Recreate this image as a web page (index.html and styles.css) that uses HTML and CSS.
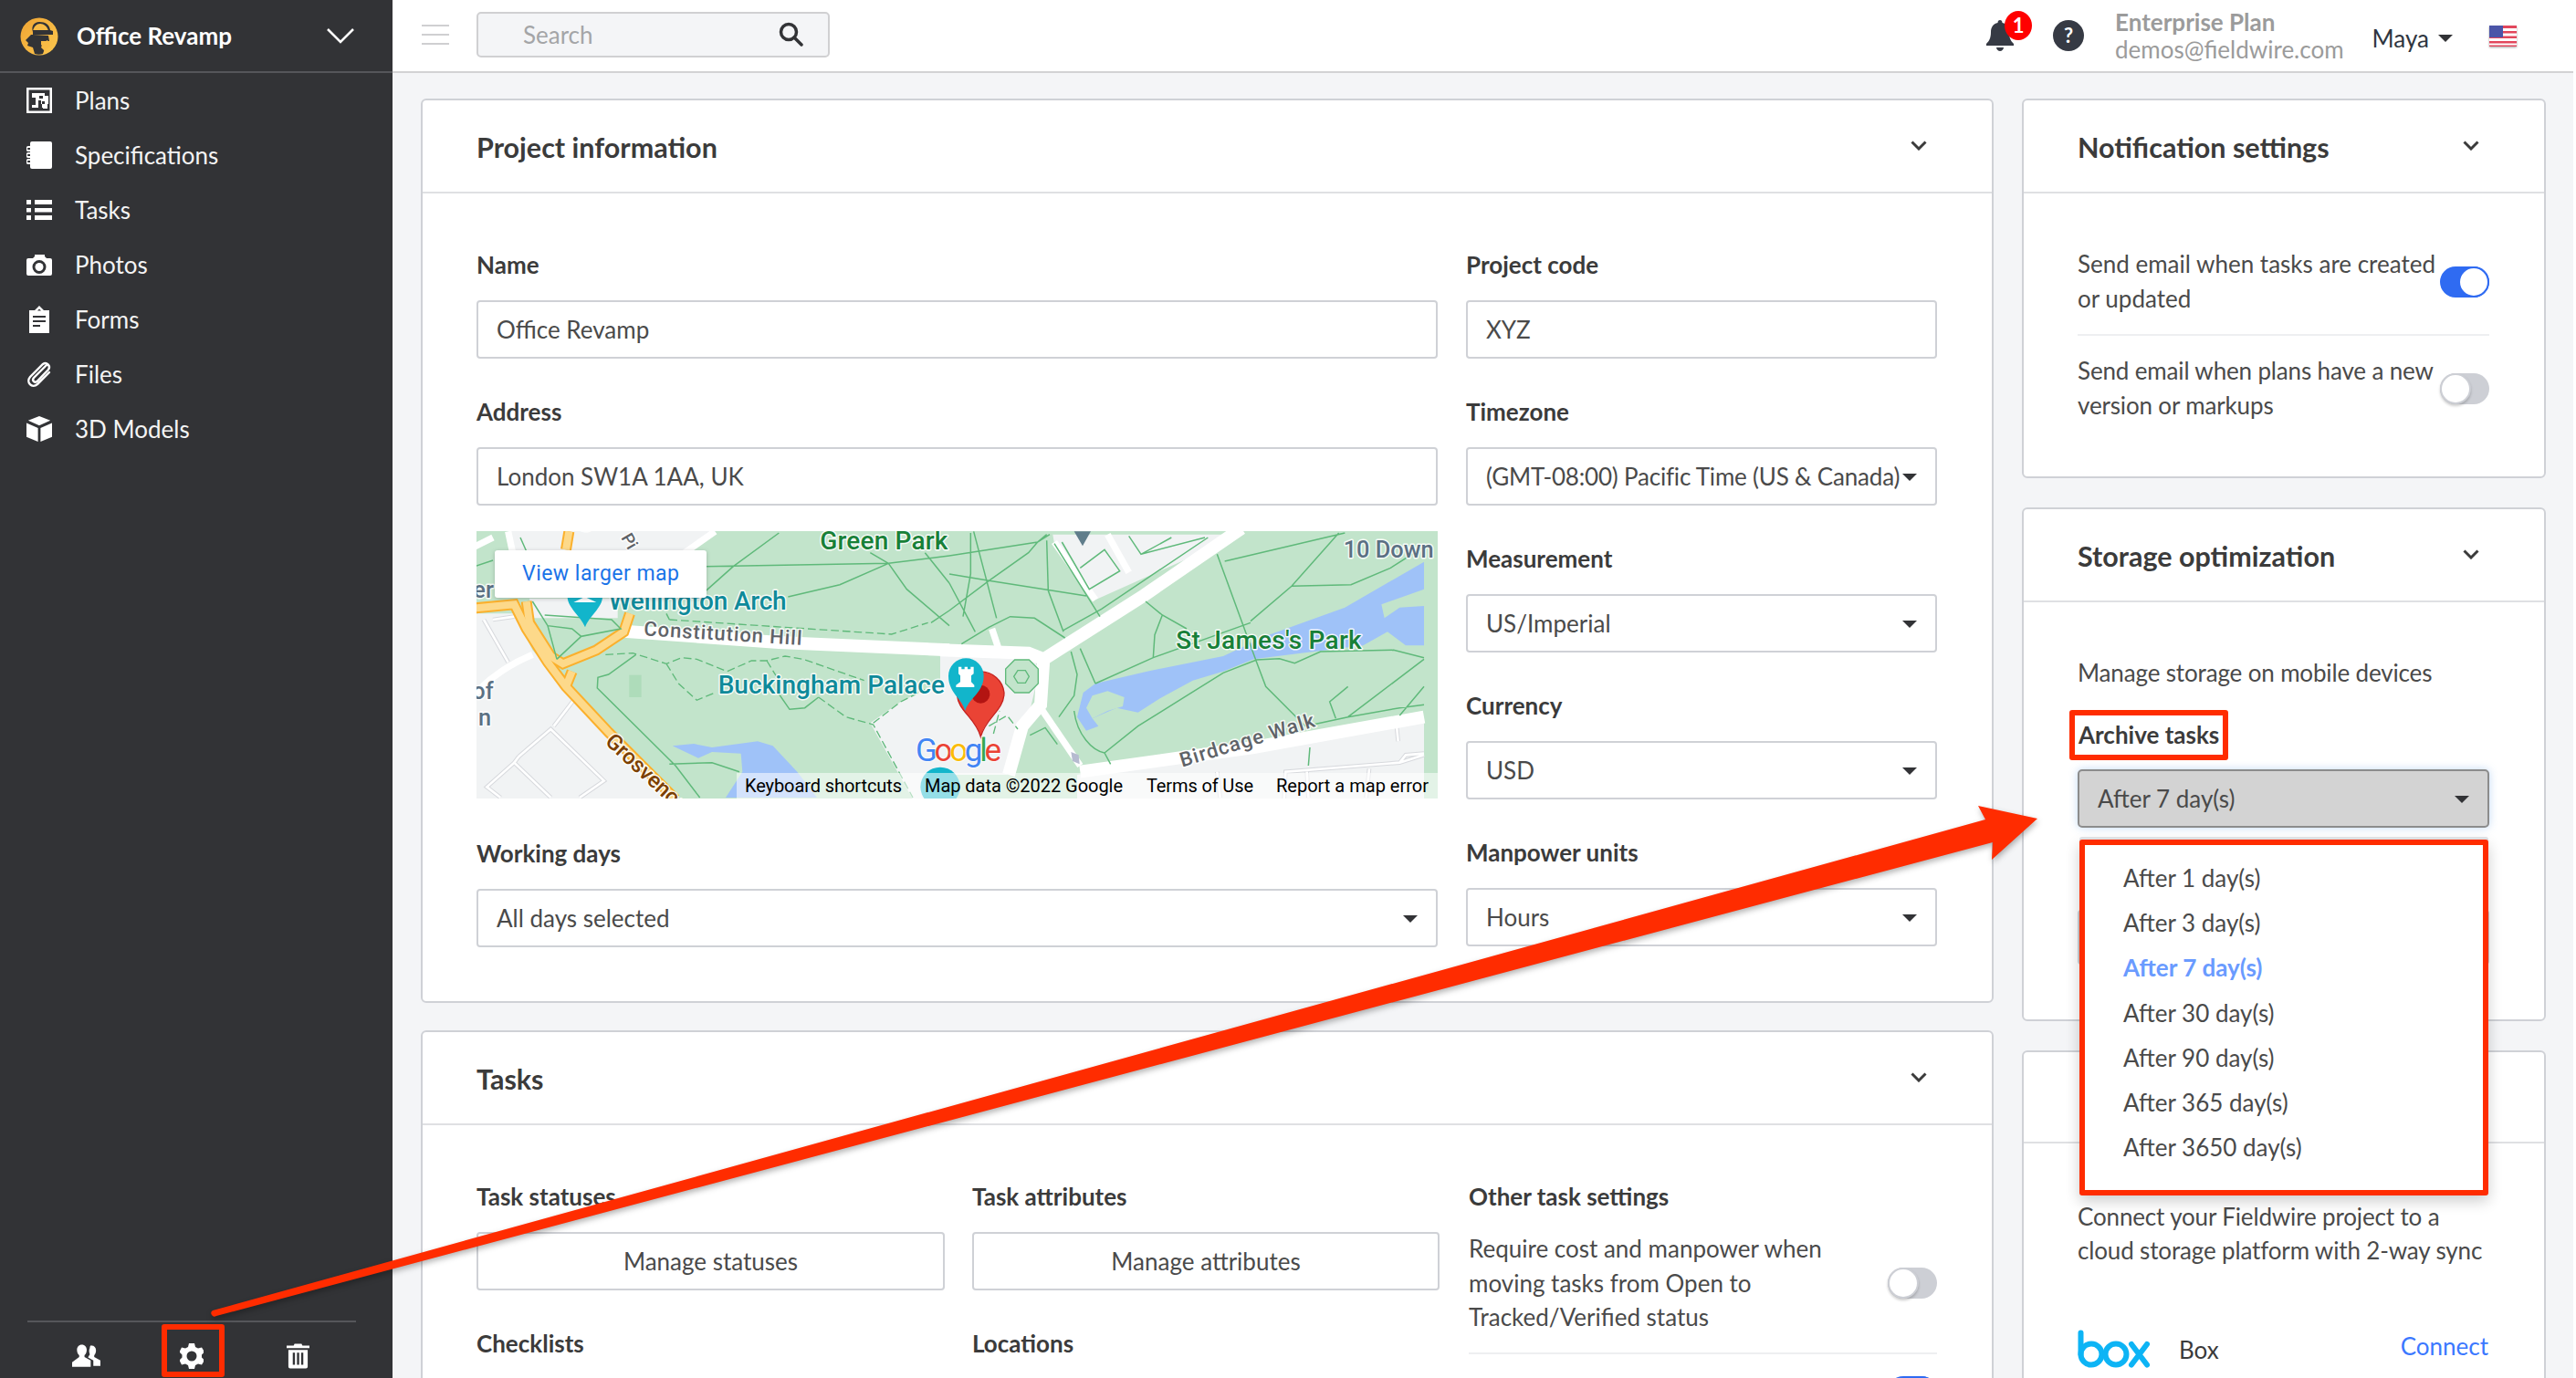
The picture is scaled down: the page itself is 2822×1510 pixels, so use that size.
FILE: index.html
```html
<!DOCTYPE html>
<html lang="en">
<head>
<meta charset="utf-8">
<title>Fieldwire – Project settings</title>
<link rel="stylesheet" href="styles.css">
</head>
<body>
<div class="app">
  <aside class="sidebar">
    <div class="sb-head">
      <svg class="logo" viewBox="0 0 42 42">
        <defs><linearGradient id="lg" x1="0" y1="0" x2="1" y2="1"><stop offset="0" stop-color="#efa433"/><stop offset="1" stop-color="#fcc84f"/></linearGradient></defs>
        <circle cx="21" cy="21" r="20.5" fill="url(#lg)"/>
        <path class="logo-d" d="M21 5c7 0 11 3 12 9l3 1v4H12l-6 6 3 3-1 3 6 2 2 7c3 1 6 1 9 0l2-6-4-4v-4h9l-1-6-17-1v-3C12 10 15 5 21 5z"/>
        <path class="logo-y" d="M14 15c1-5 4-8 8-8s8 3 9 8z"/>
        <path class="logo-d" d="M14 14h17v1.500H14z"/>
        <path class="logo-y" d="M25 28l5-3 3 6-6 6-4-4z"/>
      </svg>
      <span class="sb-title">Office Revamp</span>
      <svg class="sb-chev" viewBox="0 0 30 17"><path d="M1 1l14 14L29 1"/></svg>
    </div>
    <nav class="nav">
      <a class="nav-item">
        <svg class="ico" viewBox="0 0 28 28"><path fill-rule="evenodd" d="M0 0h28v28H0zM2.500 2.500v23h23v-23z"/><path d="M6 6h14v3h-6v3h4v-3h6v9h-4v-3h-3v3h3v4h-3v-4h-1v-4h-3v8H6v-3h4v-8H6z" fill-rule="evenodd"/><path d="M18 18h5v5h-5z"/></svg>
        <span>Plans</span></a>
      <a class="nav-item">
        <svg class="ico" viewBox="0 0 28 30"><path d="M6 0h20a2 2 0 0 1 2 2v26a2 2 0 0 1-2 2H6a2 2 0 0 1-2-2V2a2 2 0 0 1 2-2z"/><path class="ring" d="M6 6H2a1.500 1.500 0 0 0 0 4h4M6 13H2a1.500 1.500 0 0 0 0 4h4M6 20H2a1.500 1.500 0 0 0 0 4h4"/></svg>
        <span>Specifications</span></a>
      <a class="nav-item">
        <svg class="ico" viewBox="0 0 28 22"><path d="M0 0h5v5H0zM9 0h19v5H9zM0 9h5v4.500H0zM9 9h19v4.500H9zM0 17h5v5H0zM9 17h19v5H9z"/></svg>
        <span>Tasks</span></a>
      <a class="nav-item">
        <svg class="ico" viewBox="0 0 28 24"><path fill-rule="evenodd" d="M2 5h5l2-2V1h11v2l2 2h4a2 2 0 0 1 2 2v15a2 2 0 0 1-2 2H2a2 2 0 0 1-2-2V7a2 2 0 0 1 2-2zM14 7a7.500 7.500 0 1 0 0 15 7.500 7.500 0 0 0 0-15z"/><circle cx="14" cy="14.500" r="4.500"/></svg>
        <span>Photos</span></a>
      <a class="nav-item">
        <svg class="ico" viewBox="0 0 24 30"><path fill-rule="evenodd" d="M1 5h6l5-5 5 5h6v25H1zM12 3.500L10 5.500h4zM5 11v2h14v-2zM5 16v2h14v-2zM5 21v2h8v-2z"/></svg>
        <span>Forms</span></a>
      <a class="nav-item">
        <svg class="ico" viewBox="0 0 28 30"><path class="clip" d="M23 4L8 19c-2.500 3 1 6 3.500 4L24 10c3-4-2-9-6-6L4 18c-5 6 2 13 8 8L25 13"/></svg>
        <span>Files</span></a>
      <a class="nav-item">
        <svg class="ico cube" viewBox="0 0 30 30"><path d="M15 0l13 5-13 6L2 5zM0 8l13.500 6v16L0 24.500zM30 8v16.500L16.500 30V14z"/></svg>
        <span>3D Models</span></a>
    </nav>
    <div class="sb-foot">
      <span class="foot-ico">
        <svg class="fi-users" viewBox="0 0 32 26"><path d="M11 0c3.500 0 5.500 2.500 5.500 6 0 2.500-1 5-2.500 6v2l7 4v7H0v-5l8-6v-2C6.500 11 5.500 8.500 5.500 6 5.500 2.500 7.500 0 11 0z"/><path d="M22 1c3 0 5 2 5 5.500 0 2.500-1 4.500-2 5.500v2l7 4v6h-8v-6l-6-3.500c1-2 2-3 2-3.500-1-3-1-5 0-7 0-2 1-3.500 2-3z"/></svg>
      </span>
      <span class="foot-ico foot-mark">
        <svg class="fi-gear" viewBox="0 0 26 28"><path fill-rule="evenodd" d="M10 0h6l1 4 3 1.500 4-1 3 5-3 3v3l3 3-3 5-4-1-3 1.500-1 4h-6l-1-4L6 22.500l-4 1-2.500-5 3-3v-3l-3-3 2.500-5 4 1L9 4zM13 8.500a5.500 5.500 0 1 0 0 11 5.500 5.500 0 0 0 0-11z"/></svg>
      </span>
      <span class="foot-ico">
        <svg class="fi-trash" viewBox="0 0 26 28"><path fill-rule="evenodd" d="M9 0h8l1 2h8v3H0V2h8zM2 7h22v19a2 2 0 0 1-2 2H4a2 2 0 0 1-2-2zM7 10v14h2.500V10zM11.800 10v14h2.500V10zM16.500 10v14H19V10z"/></svg>
      </span>
    </div>
  </aside>

  <main class="main">
    <header class="topbar">
      <div class="burger"><i></i><i></i><i></i></div>
      <div class="search">
        <span>Search</span>
        <svg class="search-ico" viewBox="0 0 27 27"><circle cx="11" cy="11" r="8.500"/><path d="M17 17l8 8"/></svg>
      </div>
      <div class="top-right">
        <div class="bell">
          <svg viewBox="0 0 30 34"><path d="M15 0c1.500 0 2.500 1 2.500 3 5 1 7.500 5 7.500 10 0 7 2 10 5 13v2H0v-2c3-3 5-6 5-13 0-5 2.500-9 7.500-10 0-2 1-3 2.500-3z"/><path d="M11 30h8c0 2-2 4-4 4s-4-2-4-4z"/></svg>
          <b class="badge">1</b>
        </div>
        <span class="help">?</span>
        <div class="plan">
          <strong>Enterprise Plan</strong>
          <span>demos@fieldwire.com</span>
        </div>
        <span class="user">Maya</span>
        <i class="caret caret-user"></i>
        <svg class="flag" viewBox="0 0 30 23">
          <rect width="30" height="23" fill="#fff"/>
          <path d="M0 0h30v3H0zM0 6h30v2.500H0zM0 11.500h30V14H0zM0 17h30v2.500H0zM0 21.500h30V23H0z" fill="#e2475c"/>
          <rect width="15" height="13" fill="#4b55a8"/>
        </svg>
      </div>
    </header>

    <div class="content">
      <div class="col-left">
        <section class="card">
          <div class="card-head"><h2>Project information</h2><svg class="chev" viewBox="0 0 18 11"><path d="M1.500 1.500L9 9l7.500-7.500"/></svg></div>
          <div class="card-body form">
            <div class="form-col wide">
              <div class="field"><label>Name</label><div class="input">Office Revamp</div></div>
              <div class="field"><label>Address</label><div class="input">London SW1A 1AA, UK</div></div>
              <svg class="map" viewBox="522 583 1053 293" role="img">
                <defs>
                  <g id="sta"><path d="M260 650L325 565M145 750L250 660L425 830L345 885M130 770L40 850L85 885M145 750L130 770L250 885M30 300L110 440M60 300L130 290"/></g>
                  <g id="stb"><path d="M1100 890L1105 800L1480 770L1560 745M1470 650L1475 700M1480 770L1500 745L1560 740M880 800L890 885M1380 790L1370 885M1175 800L1180 885"/></g>
                </defs>
                <rect class="m-park" x="522" y="583" width="1053" height="293"/>
                <g transform="translate(520 580) scale(.33333)">
                  <path class="m-gray" d="M0 280L130 280L190 400L330 560L650 890L0 890Z"/>
                  <path class="m-gray" d="M110 0H790L700 80H130Z"/>
                  <path class="m-gray" d="M180 230H470V295H190Z"/>
                  <path class="m-gray" d="M1300 640L1400 570L1560 490V890H1440Z"/>
                  <use href="#sta" class="m-edge"/><use href="#sta" class="m-st"/>
                  <path class="m-road" d="M0 545C60 480 130 440 190 415"/>
                  <path class="m-road" d="M110 10L125 80M0 60L60 30M690 80L790 10"/>
                  <path class="m-road-big" d="M490 338L1000 375L1560 400"/>
                  <path class="m-hw-o" d="M0 262L130 250L170 330L240 440L300 520L440 670L660 890"/>
                  <path class="m-hw-o" d="M170 240L180 310L250 420L290 445L400 400L490 340L510 280"/>
                  <path class="m-hw-o" d="M300 520L320 470"/>
                  <path class="m-hw-o" d="M310 10L300 70"/>
                  <path class="m-hw-y" d="M0 262L130 250L170 330L240 440L300 520L440 670L660 890"/>
                  <path class="m-hw-y" d="M170 240L180 310L250 420L290 445L400 400L490 340L510 280"/>
                  <path class="m-hw-y" d="M300 520L320 470"/>
                  <path class="m-hw-y" d="M310 10L300 70"/>
                  <path class="m-water" d="M650 715L720 708L780 720L930 700L980 715L1060 800L1125 885H825L880 800L875 740L780 735L735 755Z"/>
                  <rect class="m-patch" x="508" y="482" width="40" height="73"/>
                  <path class="m-path" d="M760 125L1360 115L1560 90M850 125L760 205M1030 225L1200 185L1360 115L1420 200L1560 320M1300 80L1360 115M1480 80L1560 180M1000 15L850 125M530 415L440 480L405 490L403 525L660 780L740 885M990 530L1035 595L1085 590L1130 555M190 240L240 320L320 330L350 355L480 330L450 300L230 285M240 320L270 430M350 355L270 430M640 775L780 770L870 800M0 125L60 105M150 30L170 75M640 300L630 280M1560 270L1500 310"/>
                  <path class="m-dash" d="M640 300L1370 348L1490 310M430 415L520 410L630 445L680 425L730 430L830 470L910 435L960 435L1020 420L1080 430L1280 500M630 445L670 510L730 565L790 540M960 435L1000 500M1130 555L1220 620L1310 645L1440 885M1310 640L1400 570L1480 530"/>
                  <path class="m-pin" d="M363 325C350 290 305 260 305 225H420C420 260 375 290 363 325Z"/>
                  <path class="m-white" d="M325 243L362 225L400 243Z"/>
                </g>
                <g transform="translate(1040 580) scale(.33333)">
                  <path class="m-gray" d="M-30 400H270L295 470L260 620L190 810H-30Z"/>
                  <path class="m-gray" d="M340 20H960L480 235L345 50Z"/>
                  <path class="m-gray" d="M420 810L1560 640V890H420Z"/>
                  <use href="#stb" class="m-edge"/><use href="#stb" class="m-st"/>
                  <path class="m-road-big" d="M-30 400L260 410L310 430L640 220L960 0"/>
                  <path class="m-road-big" d="M310 430L300 580L240 650L195 810"/>
                  <path class="m-road" d="M300 590L430 780"/>
                  <path class="m-road-big" d="M430 800L1000 720L1560 620"/>
                  <path class="m-road" d="M140 330L160 390M520 20L590 145M345 45L480 235"/>
                  <path class="m-water" d="M420 620L440 540L480 510L650 470L900 420L1050 350L1300 260L1560 110V200L1420 250L1430 295L1480 260L1560 255V385L1500 385L1440 340L1360 385L1000 430L900 470L800 500L690 560L620 605L550 590L470 625L490 650L450 665Z"/>
                  <path class="m-park" d="M450 590L470 550L520 535L575 555L570 585L520 600L470 625Z"/>
                  <path class="m-path" d="M0 90L290 45L330 20M0 150L130 172L450 222M0 270L130 172L260 80L290 45L320 20M80 10L155 295M70 15L70 150L45 290M320 40L325 205L375 340M0 180L85 340M375 335L500 265L850 30M345 50L495 290M40 380L130 325L200 290L280 295L380 360M880 85L1010 440L1040 520L1170 650M905 108L1300 15M1125 190L1320 185L1450 130L1560 60M990 305L1125 190L1280 15M645 240L700 285L780 330M700 285L675 350L670 425M480 510L670 425L990 310M430 395L480 510M400 405L420 480L410 550L360 620M410 600C420 680 470 730 510 738L620 650L900 475L1010 432L1085 428L1135 443L1220 405L1460 400L1560 425M510 738L530 775M1170 650L1310 620L1480 590L1560 580M1310 620L1560 430M1310 520L1250 570L1270 625M1480 615L1560 520M1185 720L1180 780M265 680L315 655L355 710M370 45L460 200L560 140L510 70L430 130M630 85L840 30M590 25L630 85L730 30"/>
                  <path class="m-dash" d="M130 650L190 615L225 660M145 675L165 600"/>
                  <path class="m-octa" d="M215 432H262L292 462V510L262 540H215L185 510V462Z"/>
                  <path class="m-octa-in" d="M225 467H250L262 487L250 508H225L212 487Z"/>
                  <path class="m-arrow" d="M400 735L425 745L428 775L405 765Z"/>
                  <path class="m-slate" d="M410 10H465L438 58Z"/>
                  <path class="m-red" d="M103 685C85 620 25 600 25 540A78 78 0 0 1 180 540C180 600 120 620 103 685Z"/>
                  <circle class="m-red-dot" cx="103" cy="545" r="30"/>
                  <path class="m-pin" d="M52 600C42 560 -3 540 -3 485A58 58 0 0 1 113 485C113 540 62 560 52 600Z"/>
                  <path class="m-white" d="M30 455H40V463H50V455H60V463H70V455H80V478L72 484V505L82 515V522H22V515L36 505V484L30 478Z"/>
                  <circle class="m-pin" cx="-30" cy="850" r="65"/>
                </g>
                <g transform="translate(520 580) scale(.33333)">
                  <text class="ml l-green" x="1135" y="68" textLength="420">Green Park</text>
                  <text class="ml l-teal" x="440" y="268" textLength="585">Wellington Arch</text>
                  <text class="ml l-teal" x="800" y="542" textLength="745">Buckingham Palace</text>
                  <text class="ml l-road" x="555" y="352" textLength="520" transform="rotate(3.500 555 352)">Constitution Hill</text>
                  <text class="ml l-brown" x="425" y="705" transform="rotate(43 425 705)">Grosvenor</text>
                  <text class="ml l-brown l-sm" x="345" y="12" transform="rotate(90 345 12)" text-anchor="end">20</text>
                  <text class="ml l-slate" x="-5" y="228" fill="#0f8a9a">er</text>
                  <text class="ml l-slate" x="-8" y="560">of</text>
                  <text class="ml l-slate" x="12" y="648">n</text>
                  <text class="ml l-road l-sm" x="480" y="30" transform="rotate(60 480 30)">Pi</text>
                </g>
                <g transform="translate(1040 580) scale(.33333)">
                  <text class="ml l-green" x="745" y="395" textLength="610">St James's Park</text>
                  <text class="ml l-slate" x="1295" y="97">10 Down</text>
                  <text class="ml l-road" x="765" y="785" textLength="460" transform="rotate(-17 765 785)">Birdcage Walk</text>
                </g>
                <text class="m-google" x="1003" y="835" textLength="94"><tspan fill="#4285f4">G</tspan><tspan fill="#ea4335">o</tspan><tspan fill="#fbbc05">o</tspan><tspan fill="#4285f4">g</tspan><tspan fill="#34a853">l</tspan><tspan fill="#ea4335">e</tspan></text>
                <rect class="m-foot" x="807" y="848" width="768" height="28"/>
                <text class="m-ft" x="816" y="869" textLength="172">Keyboard shortcuts</text>
                <text class="m-ft" x="1013" y="869" textLength="217">Map data ©2022 Google</text>
                <text class="m-ft" x="1256" y="869" textLength="117">Terms of Use</text>
                <text class="m-ft" x="1398" y="869" textLength="167">Report a map error</text>
                <rect class="m-btn" x="542" y="604" width="232" height="52" rx="3"/>
                <text class="m-link" x="572" y="637" textLength="172">View larger map</text>
              </svg>
              <div class="field field-after-map"><label>Working days</label><div class="input select">All days selected<i class="caret"></i></div></div>
            </div>
            <div class="form-col narrow">
              <div class="field"><label>Project code</label><div class="input">XYZ</div></div>
              <div class="field"><label>Timezone</label><div class="input select tz">(GMT-08:00) Pacific Time (US &amp; Canada)<i class="caret"></i></div></div>
              <div class="field"><label>Measurement</label><div class="input select">US/Imperial<i class="caret"></i></div></div>
              <div class="field"><label>Currency</label><div class="input select">USD<i class="caret"></i></div></div>
              <div class="field"><label>Manpower units</label><div class="input select">Hours<i class="caret"></i></div></div>
            </div>
          </div>
        </section>

        <section class="card">
          <div class="card-head"><h2>Tasks</h2><svg class="chev" viewBox="0 0 18 11"><path d="M1.500 1.500L9 9l7.500-7.500"/></svg></div>
          <div class="card-body tasks">
            <div class="task-col">
              <label>Task statuses</label>
              <div class="btn">Manage statuses</div>
              <label class="label-next">Checklists</label>
            </div>
            <div class="task-col">
              <label>Task attributes</label>
              <div class="btn">Manage attributes</div>
              <label class="label-next">Locations</label>
            </div>
            <div class="task-col task-col-last">
              <label>Other task settings</label>
              <div class="row row-task">
                <p>Require cost and manpower when moving tasks from Open to Tracked/Verified status</p>
                <span class="toggle"></span>
              </div>
              <div class="row-next"><span class="toggle on"></span></div>
            </div>
          </div>
        </section>
      </div>

      <div class="col-right">
        <section class="card">
          <div class="card-head"><h2>Notification settings</h2><svg class="chev" viewBox="0 0 18 11"><path d="M1.500 1.500L9 9l7.500-7.500"/></svg></div>
          <div class="card-body notif">
            <div class="row row-line">
              <p>Send email when tasks are created or updated</p>
              <span class="toggle on"></span>
            </div>
            <div class="row">
              <p class="tight">Send email when plans have a new version or markups</p>
              <span class="toggle"></span>
            </div>
          </div>
        </section>

        <section class="card">
          <div class="card-head"><h2>Storage optimization</h2><svg class="chev" viewBox="0 0 18 11"><path d="M1.500 1.500L9 9l7.500-7.500"/></svg></div>
          <div class="card-body storage">
            <p class="manage">Manage storage on mobile devices</p>
            <label class="boxed">Archive tasks</label>
            <div class="dd">
              <div class="input select focused">After 7 day(s)<i class="caret"></i></div>
              <ul class="menu">
                <li>After 1 day(s)</li>
                <li>After 3 day(s)</li>
                <li class="sel">After 7 day(s)</li>
                <li>After 30 day(s)</li>
                <li>After 90 day(s)</li>
                <li>After 365 day(s)</li>
                <li>After 3650 day(s)</li>
              </ul>
            </div>
            <div class="input behind"></div>
          </div>
        </section>

        <section class="card">
          <div class="card-head card-head-blank"></div>
          <div class="card-body cloud">
            <p class="tight">Connect your Fieldwire project to a cloud storage platform with 2-way sync</p>
            <div class="box-row">
              <svg class="box-logo" viewBox="0 0 80 42"><g><path d="M3.500 3.500V27"/><circle cx="15" cy="27" r="11.500"/><circle cx="42" cy="27" r="11.500"/><path d="M59 16l17 22.500M76 16L59 38.500"/></g></svg>
              <span class="box-name">Box</span>
              <a class="connect">Connect</a>
            </div>
          </div>
        </section>
      </div>
    </div>
  </main>
</div>
<svg class="arrow" viewBox="0 0 2822 1510"><path d="M233 1436L2175 898L2167 883L2232 897L2182 942L2183 923L237 1442A3 3 0 0 1 233 1436Z"/></svg>
</body>
</html>
```

FILE: styles.css
```css
*, *::before, *::after { box-sizing: border-box; }
html, body { margin: 0; height: 100%; }
body { font-family: "Lato", "Noto Sans", sans-serif; font-size: 26px; color: #4a4a4a; background: #fff; overflow: hidden; }
p, h2, ul { margin: 0; padding: 0; }
.app { display: flex; height: 1510px; overflow: hidden; }

/* sidebar */
.sidebar { width: 430px; flex: none; background: #323336; color: #fff; display: flex; flex-direction: column; }
.sb-head { height: 80px; border-bottom: 2px solid #55565a; display: flex; align-items: center; padding: 0 42px 0 22px; flex: none; }
.logo { width: 42px; height: 42px; flex: none; margin-top: 1px; }
.logo-d { fill: #323336; }
.logo-y { fill: #f8bb45; }
.sb-title { margin-left: 20px; font-weight: 700; font-size: 26px; flex: 1; }
.sb-chev { width: 30px; height: 17px; fill: none; stroke: #fff; stroke-width: 2.500; }
.nav { padding-top: 0; flex: 1; }
.nav-item { height: 60px; display: flex; align-items: center; padding-left: 29px; font-size: 26px; color: #f4f4f4; }
.nav-item span { margin-left: 25px; }
.ico { width: 28px; height: 30px; fill: #fff; flex: none; }
.ring { fill: none; stroke: #fff; stroke-width: 1.800; }
.clip { fill: none; stroke: #fff; stroke-width: 2.400; stroke-linecap: round; }
.sb-foot { margin: 0 40px 0 30px; height: 63px; border-top: 2px solid #55565a; display: flex; flex: none; }
.foot-ico { width: 104px; display: flex; align-items: center; justify-content: center; position: relative; padding-top: 13px; }
.foot-ico:first-child { width: 128px; }
.foot-ico:last-child { width: 128px; }
.fi-users { width: 31px; height: 26px; fill: #fff; }
.fi-gear { width: 26px; height: 28px; fill: #fff; }
.fi-trash { width: 25px; height: 28px; fill: #fff; }
.foot-mark::after { content: ""; position: absolute; left: 19px; top: 2px; width: 69px; height: 58px; border: 6px solid #ff2c00; border-radius: 3px; }

/* main */
.main { width: 2389px; flex: none; background: #f4f5f7; display: flex; flex-direction: column; }
.topbar { height: 80px; flex: none; background: #fff; border-bottom: 2px solid #d2d2d4; display: flex; align-items: center; padding-left: 32px; }
.burger { width: 30px; display: flex; flex-direction: column; gap: 8px; margin-bottom: 2px; }
.burger i { display: block; height: 2px; background: #cfcfd1; }
.search { width: 387px; height: 50px; margin-left: 30px; margin-bottom: 3px; background: #f4f5f7; border: 2px solid #d0d0d2; border-radius: 5px; display: flex; align-items: center; justify-content: space-between; padding: 0 27px 0 49px; color: #a4a5a7; }
.search-ico { width: 27px; height: 27px; fill: none; stroke: #323336; stroke-width: 3.500; stroke-linecap: round; }
.top-right { margin-left: auto; display: flex; align-items: center; }
.bell { width: 30px; height: 34px; position: relative; fill: #363a44; }
.bell svg { width: 30px; height: 34px; display: block; }
.badge { position: absolute; left: 20px; top: -10px; width: 30px; height: 32px; border-radius: 50%; background: #f00; color: #fff; font-size: 22px; text-align: center; line-height: 32px; }
.help { width: 34px; height: 34px; margin-left: 43px; border-radius: 50%; background: #363a44; color: #fff; font-weight: 700; font-size: 22px; text-align: center; line-height: 34px; }
.plan { margin-left: 34px; display: flex; flex-direction: column; color: #9b9b9b; line-height: 30px; font-size: 26px; }
.plan strong { font-weight: 700; }
.user { margin-left: 31px; color: #2f3640; font-size: 26px; margin-top: 6px; }
.caret { display: inline-block; width: 0; height: 0; border-left: 8px solid transparent; border-right: 8px solid transparent; border-top: 8px solid #323336; }
.caret-user { margin-left: 10px; margin-top: 6px; }
.flag { width: 30px; height: 23px; margin-left: 40px; margin-right: 62px; filter: drop-shadow(0 1px 1px rgba(0,0,0,.35)); }

/* content */
.content { flex: 1; display: flex; gap: 31px; padding: 28px 32px 0 31px; min-height: 0; }
.col-left { width: 1723px; flex: none; display: flex; flex-direction: column; gap: 30px; }
.col-right { width: 574px; flex: none; display: flex; flex-direction: column; gap: 32px; }
.card { background: #fff; border: 2px solid #cfd1d6; border-radius: 6px; flex: none; }
.card-head { height: 102px; border-bottom: 2px solid #dfe0e3; display: flex; align-items: center; justify-content: space-between; padding: 2px 59px 0 59px; }
.card-head h2 { font-size: 30.500px; font-weight: 700; color: #3b3b3b; }
.chev { width: 18px; height: 11px; fill: none; stroke: #3b3b3b; stroke-width: 3; margin-right: 12px; margin-bottom: 4px; }
label { display: block; font-weight: 700; color: #3b3b3b; line-height: 36px; }

/* form */
.form { display: flex; gap: 31px; padding: 60px 61px 59px 59px; }
.form-col { display: flex; flex-direction: column; }
.wide { width: 1053px; flex: none; }
.narrow { width: 516px; flex: none; }
.field { margin-bottom: 40px; }
.form-col .field:last-child { margin-bottom: 0; }
.field > label { margin-bottom: 21px; }
.input { height: 64px; border: 2px solid #cfd1d6; border-radius: 4px; background: #fff; display: flex; align-items: center; padding-left: 20px; position: relative; white-space: nowrap; color: #4a4a4a; }
.select .caret { position: absolute; right: 20px; top: 27px; }
.tz { letter-spacing: -.2px; }
.tight { letter-spacing: -.15px; }
.map { display: block; width: 1053px; height: 293px; margin-top: -12px; }
.field-after-map { margin-top: 42px; }

.m-park { fill: #c2e4cb; }
.m-gray { fill: #f1f3f4; }
.m-patch { fill: #aedcba; }
.m-water { fill: #9fc2f8; }
.m-road { fill: none; stroke: #fff; stroke-width: 22; }
.m-road-big { fill: none; stroke: #fff; stroke-width: 42; }
.m-edge { fill: none; stroke: #d7d9dd; stroke-width: 14; }
.m-st { fill: none; stroke: #fff; stroke-width: 8; }
.m-hw-o { fill: none; stroke: #fbb02c; stroke-width: 36; }
.m-hw-y { fill: none; stroke: #fdd98a; stroke-width: 24; }
.m-path { fill: none; stroke: #5fb97a; stroke-width: 4.500; }
.m-dash { fill: none; stroke: #5fb97a; stroke-width: 4; stroke-dasharray: 26 12; }
.m-pin { fill: #12b5cb; }
.m-white { fill: #fff; }
.m-red { fill: #ea4335; stroke: #c5221f; stroke-width: 4; }
.m-red-dot { fill: #b31412; }
.m-slate { fill: #607d8b; }
.m-arrow { fill: #b6bbd0; }
.m-octa { fill: #c2e4cb; stroke: #5fb97a; stroke-width: 4; }
.m-octa-in { fill: none; stroke: #5fb97a; stroke-width: 4; }
.ml { font-family: "Roboto", "Liberation Sans", sans-serif; font-size: 84px; font-weight: 500; paint-order: stroke; stroke: rgba(255,255,255,.85); stroke-width: 9; stroke-linejoin: round; }
.l-green { fill: #188038; }
.l-teal { fill: #0f8a9a; }
.l-road { fill: #5f6368; font-size: 66px; }
.l-brown { fill: #7b3f00; font-size: 72px; }
.l-slate { fill: #5b7083; font-size: 76px; }
.l-sm { font-size: 56px; }
.m-google { font-family: "Roboto", "Liberation Sans", sans-serif; font-size: 35px; font-weight: 400; paint-order: stroke; stroke: rgba(255,255,255,.7); stroke-width: 2; }
.m-foot { fill: rgba(255,255,255,.55); }
.m-ft { font-family: "Roboto", "Liberation Sans", sans-serif; font-size: 20px; fill: #000; }
.m-btn { fill: #fff; filter: drop-shadow(0 1px 2px rgba(60,64,67,.3)); }
.m-link { font-family: "Roboto", "Liberation Sans", sans-serif; font-size: 23px; fill: #1a73e8; }

/* tasks */
.tasks { display: grid; grid-template-columns: 513px 512px 515px; column-gap: 30px; padding: 60px 61px 0 59px; }
.task-col-last { padding-left: 2px; }
.btn { height: 64px; margin-top: 21px; border: 2px solid #cfd1d6; border-radius: 4px; display: flex; align-items: center; justify-content: center; color: #4a4a4a; }
.label-next { margin-top: 40px; }
.row { display: flex; align-items: center; justify-content: space-between; line-height: 37.500px; }
.row-task { margin-top: 21px; padding-bottom: 19px; border-bottom: 2px solid #eeeff1; }
.row-task p { width: 440px; }
.row-next { display: flex; justify-content: flex-end; margin-top: 24px; }
.toggle { width: 54px; height: 34px; flex: none; border-radius: 17px; background: #cdcfd5; position: relative; display: block; }
.toggle::after { content: ""; position: absolute; left: 0; top: 0; width: 34px; height: 34px; border-radius: 50%; background: #fff; border: 2px solid #cdcfd5; box-shadow: 0 2px 3px rgba(0,0,0,.2); }
.toggle.on { background: #2f6bf2; }
.toggle.on::after { left: 20px; border-color: #2f6bf2; box-shadow: none; }

/* right */
.notif { padding: 59px 60px 59px 59px; }
.notif p { width: 395px; }
.row-line { padding-bottom: 20px; margin-bottom: 20px; border-bottom: 2px solid #eeeff1; }
.storage { padding: 59px 60px 0 59px; height: 457px; position: relative; }
.manage { line-height: 36px; letter-spacing: -.15px; }
.boxed { position: relative; display: inline-block; margin: 23px 0 0 -9px; padding: 0 4px; border: 6px solid #ff2c00; border-radius: 3px; line-height: 43px; height: 55px; }
.dd { position: relative; margin-top: 10px; }
.focused { background: #d3d3d3; border-color: #8c8c8c; border-radius: 5px; box-shadow: 0 0 10px rgba(120,170,230,.45); }
.menu { position: absolute; z-index: 5; left: 2px; right: 1px; top: 77px; height: 390px; list-style: none; background: #fff; border: 6px solid #ff2c00; border-radius: 3px; padding: 12px 0 0 42px; box-shadow: 0 -3px 0 #dfe0e3, 0 6px 16px rgba(0,0,0,.2); }
.menu li { line-height: 49.200px; color: #4a4a4a; }
.menu .sel { color: #6a9bff; font-weight: 700; }
.behind { margin-top: 90px; height: 60px; }
.card-head-blank { height: 100px; }
.cloud { padding: 62px 61px 0 59px; height: 400px; line-height: 37px; }
.box-row { display: flex; align-items: center; margin-top: 68px; }
.box-logo { width: 80px; height: 42px; fill: none; stroke: #0db4f5; stroke-width: 6; stroke-linecap: round; flex: none; }
.box-name { margin-left: 31px; margin-top: 2px; color: #3b3b3b; }
.connect { margin-left: auto; margin-top: -6px; color: #3b78ff; }

.arrow { position: absolute; left: 0; top: 0; width: 2822px; height: 1510px; z-index: 10; pointer-events: none; fill: #ff2c00; filter: drop-shadow(1px 3px 3px rgba(0,0,0,.3)); }
```
